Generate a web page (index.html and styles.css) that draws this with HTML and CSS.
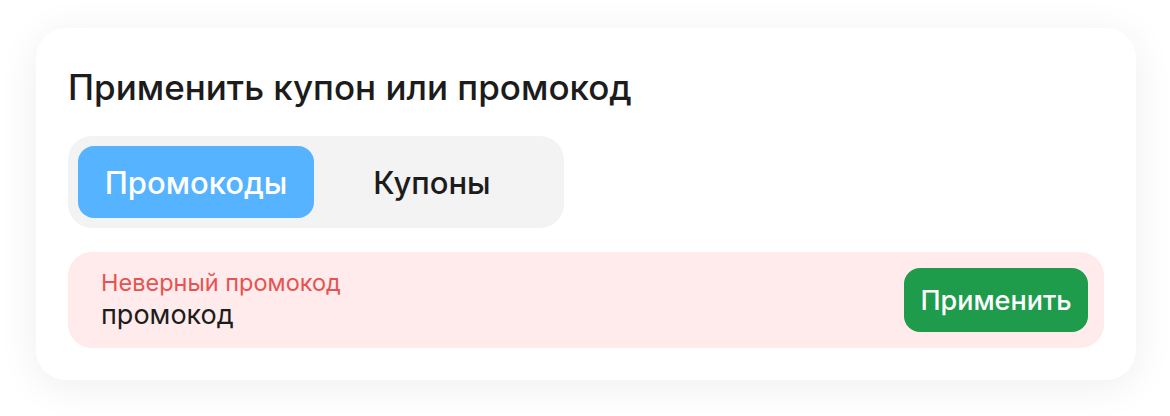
FILE: index.html
```html
<!DOCTYPE html>
<html lang="ru">
<head>
<meta charset="utf-8">
<link rel="stylesheet" href="styles.css">
</head>
<body>
<div class="card">
  <h2 class="title">Применить купон или промокод</h2>
  <div class="tabs">
    <div class="tab active">Промокоды</div>
    <div class="tab">Купоны</div>
  </div>
  <div class="field error">
    <div class="field-text">
      <div class="label">Неверный промокод</div>
      <div class="value">промокод</div>
    </div>
    <button class="apply">Применить</button>
  </div>
</div>
</body>
</html>
```
FILE: styles.css
```css
* { box-sizing: border-box; }
html, body { margin: 0; padding: 0; background: #ffffff; }
body {
  font-family: Inter, "Noto Sans", sans-serif;
  color: #1c1c1c;
  padding: 28px 34px 36px 36px;
}
.card {
  background: #fff;
  border-radius: 30px;
  box-shadow: 0 6px 40px rgba(0,0,0,0.07);
  padding: 36px 32px 32px 32px;
  display: flex;
  flex-direction: column;
}
.title {
  margin: 0;
  font-size: 35px;
  font-weight: 500;
  line-height: 46px;
  letter-spacing: 0;
}
.tabs {
  margin-top: 26px;
  align-self: flex-start;
  display: flex;
  background: #f3f3f3;
  border-radius: 24px;
  padding: 10px;
  width: 496px;
}
.tab {
  width: 236px;
  height: 72px;
  display: flex;
  align-items: center;
  justify-content: center;
  font-size: 31px;
  font-weight: 500;
  border-radius: 16px;
  color: #1c1c1c;
}
.tab.active {
  background: #55b3ff;
  color: #fff;
}
.field {
  margin-top: 24px;
  height: 96px;
  border-radius: 24px;
  background: #ffebeb;
  display: flex;
  align-items: center;
  justify-content: space-between;
  padding: 0 16px 0 33px;
}
.field-text { display: flex; flex-direction: column; }
.label {
  font-size: 23.5px;
  color: #e85252;
  line-height: 30px;
}
.value {
  font-size: 27px;
  color: #1c1c1c;
  line-height: 34px;
}
.apply {
  font-family: inherit;
  width: 184px;
  height: 64px;
  border: none;
  border-radius: 16px;
  background: #1e9b4b;
  color: #fff;
  font-size: 27px;
  font-weight: 500;
  padding: 0;
}
```
